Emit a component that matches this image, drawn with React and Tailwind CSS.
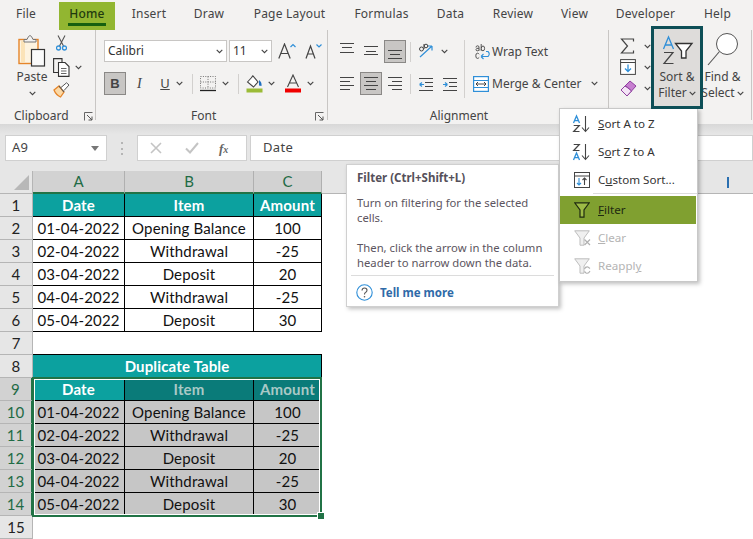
import React from "react";

const UI = { fontFamily: '"Noto Sans","Open Sans",sans-serif' };
const CELL = { fontFamily: 'Lato,"Liberation Sans",sans-serif' };

const Chev = ({ className = "", color = "#444" }) => (
  <svg width="7" height="5" viewBox="0 0 7 5" className={className}>
    <path d="M0.7 0.9 L3.5 3.7 L6.3 0.9" fill="none" stroke={color} strokeWidth="1.1" />
  </svg>
);

const Launcher = () => (
  <svg width="9" height="9" viewBox="0 0 9 9">
    <path d="M0.5 8.5 V0.5 H8.5" fill="none" stroke="#666" strokeWidth="1" />
    <path d="M3 3 L8 8 M8 4.5 V8 H4.5" fill="none" stroke="#555" strokeWidth="1" />
  </svg>
);

const Lines = ({ rows }) => (
  <svg width="14" height="14" viewBox="0 0 14 14" className="shrink-0 overflow-visible">
    {rows.map(([y, a, b], i) => (
      <path key={i} d={`M${a} ${y + 0.5} H${b}`} stroke="#444" strokeWidth="1" />
    ))}
  </svg>
);

const Separator = ({ className }) => <div className={`w-px h-[20px] bg-[#d2d0ce] shrink-0 ${className}`} />;

function Tab({ label, cls }) {
  return <div className={`flex justify-center whitespace-nowrap ${cls}`}>{label}</div>;
}

function Tabs() {
  return (
    <div className="flex h-[30px] text-[12px] text-[#444] items-start bg-[#f3f2f1] tracking-[0.2px]">
      <Tab label="File" cls="ml-[17px] w-[18px] pt-[5px]" />
      <div className="ml-[24px] w-[56px] h-[28px] mt-[2px] bg-[#92b631] flex flex-col items-center pt-[3px] text-[#1f3a0f] font-medium">
        <span className="leading-[17px]">Home</span>
        <div className="w-[38px] h-[2.5px] bg-[#16600f] mt-[1px]" />
      </div>
      <Tab label="Insert" cls="ml-[18px] w-[32px] pt-[5px]" />
      <Tab label="Draw" cls="ml-[29px] w-[30px] pt-[5px]" />
      <Tab label="Page Layout" cls="ml-[30px] w-[71px] pt-[5px]" />
      <Tab label="Formulas" cls="ml-[30px] w-[53px] pt-[5px]" />
      <Tab label="Data" cls="ml-[29px] w-[27px] pt-[5px]" />
      <Tab label="Review" cls="ml-[29px] w-[40px] pt-[5px]" />
      <Tab label="View" cls="ml-[28px] w-[27px] pt-[5px]" />
      <Tab label="Developer" cls="ml-[28px] w-[59px] pt-[5px]" />
      <Tab label="Help" cls="ml-[29px] w-[27px] pt-[5px]" />
    </div>
  );
}

const PasteIcon = () => (
  <svg width="28" height="32" viewBox="0 0 28 32">
    <rect x="1" y="4.5" width="19" height="24" fill="#fdf3e0" stroke="#e5852a" strokeWidth="1.4" />
    <rect x="3" y="6" width="4" height="21" fill="#fbe3b8" />
    <path d="M6 7 V4.5 H9 Q10.5 0.5 12 0.5 Q13.5 0.5 15 4.5 H18 V7 Z" fill="#f3f2f1" stroke="#777" strokeWidth="1" />
    <rect x="13.5" y="14.5" width="13" height="16.5" fill="#fafafa" stroke="#333" strokeWidth="1.2" />
  </svg>
);
const Scissors = () => (
  <svg width="11" height="16" viewBox="0 0 11 16">
    <path d="M2 0.5 L7.5 11 M9 0.5 L3.5 11" stroke="#555" strokeWidth="1.1" fill="none" />
    <circle cx="2.5" cy="13" r="2" fill="none" stroke="#2f8fd8" strokeWidth="1.3" />
    <circle cx="8.5" cy="13" r="2" fill="none" stroke="#2f8fd8" strokeWidth="1.3" />
  </svg>
);
const CopyIcon = () => (
  <svg width="17" height="19" viewBox="0 0 17 19">
    <path d="M5 14.5 H0.6 V0.6 H9 V4" fill="none" stroke="#333" strokeWidth="1.1" />
    <path d="M5.5 4.5 H12 L16 8.5 V18.4 H5.5 Z" fill="#fff" stroke="#333" strokeWidth="1.1" />
    <path d="M8 10.5 H13.5 M8 13 H13.5 M8 15.5 H13.5" stroke="#555" strokeWidth="0.9" />
  </svg>
);
const Brush = () => (
  <svg width="17" height="16" viewBox="0 0 17 16">
    <path d="M1 8 L6 4 L11 10 L7.5 15 Q3 13 1 8Z" fill="#fbd9a6" stroke="#e5852a" strokeWidth="1.3" />
    <path d="M6 4 L11 10" stroke="#555" strokeWidth="1.1" />
    <path d="M8 5.5 L13.5 0.8 L16 3 L11 8.5" fill="#fff" stroke="#555" strokeWidth="1" />
  </svg>
);

function Clipboard() {
  return (
    <div className="w-[96px] h-[90px] shrink-0 flex flex-col border-r border-[#c8c6c4]">
      <div className="flex h-[76px] shrink-0">
        <div className="ml-[18px] w-[28px] flex flex-col items-center pt-[5px]">
          <PasteIcon />
          <span className="text-[12px] leading-[16px] mt-[2px] text-[#444]">Paste</span>
          <Chev className="mt-[6px]" />
        </div>
        <div className="ml-[7px] flex flex-col pt-[5px]">
          <div className="ml-[3px] h-[16px]"><Scissors /></div>
          <div className="mt-[7px] h-[19px] flex items-center">
            <CopyIcon />
            <Chev className="ml-[5px]" />
          </div>
          <div className="mt-[5px]"><Brush /></div>
        </div>
      </div>
      <div className="flex h-[20px] shrink-0 items-center text-[12px] text-[#444]">
        <span className="ml-[14px] w-[52px] whitespace-nowrap">Clipboard</span>
        <span className="ml-[18px] flex"><Launcher /></span>
      </div>
    </div>
  );
}

const BigA = ({ size, chev }) => (
  <svg width="18" height="16" viewBox="0 0 18 16">
    <path d={size === "l" ? "M0.8 15.5 L6.5 1 L12.2 15.5 M2.8 10.5 H10.2" : "M2 15.5 L6.5 3 L11 15.5 M3.6 11 H9.4"} fill="none" stroke="#444" strokeWidth="1.2" />
    <path d={chev === "up" ? "M12.5 4 L15 1.5 L17.5 4" : "M12.5 1.5 L15 4 L17.5 1.5"} fill="none" stroke="#2f8fd8" strokeWidth="1.2" />
  </svg>
);

const FillIcon = () => (
  <svg width="17" height="19" viewBox="0 0 17 19">
    <path d="M1.5 8 L7 2 L12 8 L7.5 13 Z" fill="#fff" stroke="#444" strokeWidth="1.1" />
    <path d="M5.5 3 Q7 0.5 8 3" fill="none" stroke="#444" />
    <path d="M13 6 Q16 8 15.5 12 L13 11.5Z" fill="#1f6fc0" />
    <rect x="0.5" y="14.5" width="16" height="4" fill="#9bbb37" />
  </svg>
);
const FontColor = () => (
  <svg width="16" height="19" viewBox="0 0 16 19">
    <path d="M2.5 13 L8 1 L13.5 13 M4.5 9 H11.5" fill="none" stroke="#444" strokeWidth="1.1" />
    <rect x="0" y="14.5" width="16" height="4" fill="#f00000" />
  </svg>
);
const BorderIcon = () => (
  <svg width="16" height="16" viewBox="0 0 16 16">
    <path d="M0.5 0.5 H15.5 V12 H0.5 Z M8 0.5 V12 M0.5 6 H15.5" fill="none" stroke="#555" strokeWidth="0.8" strokeDasharray="1 1.4" />
    <path d="M0 14.5 H16" stroke="#222" strokeWidth="1.3" />
  </svg>
);

function Font() {
  return (
    <div className="w-[232px] h-[90px] shrink-0 flex flex-col border-r border-[#c8c6c4]">
      <div className="h-[76px] shrink-0 pl-[8px] pt-[10px] flex flex-col">
        <div className="flex h-[22px] items-center">
          <div className="w-[123px] h-[22px] bg-white border border-[#c8c6c4] flex items-center justify-between pl-[3px] pr-[3px] text-[12px] text-[#333]">
            <span>Calibri</span><Chev />
          </div>
          <div className="ml-[2px] w-[43px] h-[22px] bg-white border border-[#c8c6c4] flex items-center justify-between pl-[3px] pr-[3px] text-[12px] text-[#333]">
            <span>11</span><Chev />
          </div>
          <div className="ml-[6px] flex"><BigA size="l" chev="up" /></div>
          <div className="ml-[8px] flex"><BigA size="s" chev="down" /></div>
        </div>
        <div className="flex h-[23px] mt-[10px] items-center text-[#444]">
          <div className="w-[22px] h-[23px] bg-[#c8c6c4] border border-[#8a8886] flex items-center justify-center font-bold text-[13px] leading-none" style={{ fontFamily: '"Liberation Sans",sans-serif' }}>B</div>
          <span className="ml-[11px] w-[8px] italic text-[14px] leading-none" style={{ fontFamily: '"Liberation Serif",serif' }}>I</span>
          <span className="ml-[14px] w-[12px] underline text-[13px] leading-none text-center">U</span>
          <Chev className="ml-[5px]" />
          <Separator className="ml-[9px]" />
          <div className="ml-[7px] flex"><BorderIcon /></div>
          <Chev className="ml-[6px]" />
          <Separator className="ml-[9px]" />
          <div className="ml-[7px] flex"><FillIcon /></div>
          <Chev className="ml-[5px]" />
          <div className="ml-[10px] flex"><FontColor /></div>
          <Chev className="ml-[6px]" />
        </div>
      </div>
      <div className="flex h-[20px] shrink-0 items-center text-[12px] text-[#444]">
        <span className="ml-[95px] w-[24px]">Font</span>
        <span className="ml-[100px] flex"><Launcher /></span>
      </div>
    </div>
  );
}

const top = [[-2, 0, 14], [2, 2, 12], [7, 0, 14]];
const mid = [[1, 0, 14], [6, 2, 12], [9, 0, 14]];
const bot = [[5, 0, 14], [9, 2, 12], [13, 0, 14]];
const left = [[0, 0, 14], [4, 0, 10], [8, 0, 14], [12, 0, 10]];
const cent = [[0, 0, 14], [4, 2, 12], [8, 0, 14], [12, 2, 12]];
const right = [[0, 0, 14], [4, 4, 14], [8, 0, 14], [12, 4, 14]];

const Orient = () => (
  <svg width="18" height="17" viewBox="0 0 18 17">
    <path d="M2 14 L14 3 M14 3 H9.5 M14 3 V7.5" stroke="#2f8fd8" strokeWidth="1.2" fill="none" />
    <circle cx="3.5" cy="6" r="2" fill="none" stroke="#444" strokeWidth="1" />
    <path d="M6 1 V6" stroke="#444" />
    <circle cx="8" cy="3" r="1.8" fill="none" stroke="#444" strokeWidth="1" />
  </svg>
);
const Indent = ({ dir }) => (
  <svg width="14" height="14" viewBox="0 0 14 14">
    <path d="M0 1.5 H14 M6 5.5 H14 M6 9.5 H14 M0 13.5 H14" stroke="#444" strokeWidth="1" />
    <path d={dir === "l" ? "M0.5 7.5 H5 M0.5 7.5 L3 5.5 M0.5 7.5 L3 9.5" : "M0 7.5 H4.5 M4.5 7.5 L2 5.5 M4.5 7.5 L2 9.5"} stroke="#2f8fd8" strokeWidth="1.2" fill="none" />
  </svg>
);
const WrapIcon = () => (
  <svg width="16" height="18" viewBox="0 0 16 18" className="overflow-visible">
    <path d="M1 4.5 Q1 2.8 2.6 2.8 Q4 2.8 4 4.2 V7.8 M4 5.2 Q1 5 1 6.6 Q1 7.8 2.4 7.8 Q3.6 7.8 4 6.8 M6.2 1 V7.8 M6.2 5.2 Q6.6 3 8 3 Q9.6 3 9.6 5.4 Q9.6 7.8 8 7.8 Q6.6 7.8 6.2 6.2 M4.2 11.2 Q3.4 10.2 2.4 10.2 Q0.8 10.2 0.8 12.8 Q0.8 15.4 2.4 15.4 Q3.4 15.4 4.2 14.4" fill="none" stroke="#444" strokeWidth="0.9" />
    <path d="M6 13.5 H13 Q15.5 11 13 8.5 H11 M6 13.5 L8.5 11 M6 13.5 L8.5 16" fill="none" stroke="#2f8fd8" strokeWidth="1.1" />
  </svg>
);
const MergeIcon = () => (
  <svg width="16" height="16" viewBox="0 0 16 16">
    <rect x="0.6" y="0.6" width="14.8" height="14.8" fill="#fff" stroke="#2f8fd8" strokeWidth="1.2" />
    <path d="M0.6 4.5 H15.4 M0.6 11.5 H15.4" stroke="#2f8fd8" />
    <path d="M3 8 H13 M3 8 L5 6 M3 8 L5 10 M13 8 L11 6 M13 8 L11 10" stroke="#333" strokeWidth="0.9" fill="none" />
  </svg>
);

function Alignment() {
  const active = "w-[22px] h-[23px] bg-[#c8c6c4] border border-[#8a8886] flex items-center justify-center shrink-0";
  return (
    <div className="w-[281px] h-[90px] shrink-0 flex flex-col border-r border-[#c8c6c4]">
      <div className="h-[76px] shrink-0 flex pt-[10px]">
        <div className="w-[137px] flex flex-col border-r border-[#d2d0ce] h-[58px] pl-[12px]">
          <div className="flex h-[23px] items-center">
            <Lines rows={top} />
            <div className="ml-[10px]"><Lines rows={mid} /></div>
            <div className={`ml-[6px] ${active}`}><Lines rows={bot} /></div>
            <Separator className="ml-[4px]" />
            <div className="ml-[7px] flex"><Orient /></div>
            <Chev className="ml-[5px]" />
          </div>
          <div className="flex h-[23px] mt-[9px] items-center">
            <Lines rows={left} />
            <div className={`ml-[6px] ${active}`}><Lines rows={cent} /></div>
            <div className="ml-[6px]"><Lines rows={right} /></div>
            <Separator className="ml-[8px]" />
            <div className="ml-[8px] flex"><Indent dir="l" /></div>
            <div className="ml-[10px] flex"><Indent dir="r" /></div>
          </div>
        </div>
        <div className="flex flex-col pl-[10px] text-[12px] text-[#444]">
          <div className="flex h-[23px] items-center">
            <WrapIcon />
            <span className="ml-px whitespace-nowrap">Wrap Text</span>
          </div>
          <div className="flex h-[23px] mt-[9px] items-center -ml-[2px]">
            <MergeIcon />
            <span className="ml-[3px] whitespace-nowrap">Merge &amp; Center</span>
            <Chev className="ml-[9px]" />
          </div>
        </div>
      </div>
      <div className="flex h-[20px] shrink-0 items-center justify-center pr-[18px] text-[12px] text-[#444]">Alignment</div>
    </div>
  );
}

const Sigma = () => (
  <svg width="15" height="16" viewBox="0 0 15 16">
    <path d="M13.5 3.5 V1 H1.5 L7.5 8 L1.5 15 H13.5 V12.5" fill="none" stroke="#444" strokeWidth="1.2" />
  </svg>
);
const FillDown = () => (
  <svg width="16" height="16" viewBox="0 0 16 16">
    <rect x="0.6" y="0.6" width="14.8" height="14.8" fill="#fff" stroke="#444" strokeWidth="1" />
    <path d="M0.6 3.5 H15.4" stroke="#444" />
    <path d="M8 5.5 V12.5 M5 9.5 L8 12.5 L11 9.5" fill="none" stroke="#2f8fd8" strokeWidth="1.3" />
  </svg>
);
const Eraser = () => (
  <svg width="17" height="17" viewBox="0 0 17 17">
    <path d="M1 10 L10 1 L16 6 L7 16 Z" fill="#c77fd0" stroke="#8f3f9f" strokeWidth="1" />
    <path d="M5.5 5.5 L11.5 11" stroke="#8f3f9f" />
    <path d="M8 8 L11.5 11 L7 16 L1 10 L5 6Z" fill="#f4e5f6" stroke="#8f3f9f" strokeWidth="1" />
  </svg>
);
const SortFilter = () => (
  <svg width="36" height="34" viewBox="0 0 36 34" className="overflow-visible">
    <path d="M4.5 15 L9.5 3 L14.5 15 M6.2 11 H12.8" fill="none" stroke="#2f8fd8" strokeWidth="1.3" />
    <path d="M5 18.5 H14 L5 29.5 H14.5" fill="none" stroke="#444" strokeWidth="1.2" />
    <path d="M16.5 9.5 H33 L27 17 V24 H22.5 V17 Z" fill="#fff" stroke="#333" strokeWidth="1.3" />
  </svg>
);
const Magnifier = () => (
  <svg width="32" height="34" viewBox="0 0 32 34">
    <circle cx="20" cy="12" r="10.5" fill="#fff" stroke="#555" strokeWidth="1" />
    <path d="M12.5 19.5 L1 33" stroke="#555" strokeWidth="1.1" />
  </svg>
);

function Editing() {
  return (
    <div className="w-[143px] h-[90px] shrink-0 flex border-r border-[#c8c6c4]">
      <div className="ml-[11px] w-[31px] flex flex-col pt-[7px]">
        <div className="flex h-[18px] items-center"><Sigma /><Chev className="ml-[9px]" /></div>
        <div className="flex h-[18px] mt-[3px] items-center"><FillDown /><Chev className="ml-[8px]" /></div>
        <div className="flex h-[18px] mt-[3px] items-center"><Eraser /><Chev className="ml-[7px]" /></div>
      </div>
      <div className="relative z-10 w-[52px] h-[83px] -mt-[4px] border-[3px] border-[#0d4f57] bg-[#dedcda] flex flex-col items-center pt-[5px] text-[12px] text-[#444] leading-[16px] shrink-0">
        <SortFilter />
        <span className="mt-px whitespace-nowrap">Sort &amp;</span>
        <span className="flex items-center whitespace-nowrap">Filter<Chev className="ml-[2px]" /></span>
      </div>
      <div className="w-[39px] flex flex-col items-center pt-[2px] text-[12px] text-[#444] leading-[16px] shrink-0">
        <Magnifier />
        <span className="mt-[3px] whitespace-nowrap">Find &amp;</span>
        <span className="flex items-center whitespace-nowrap">Select<Chev className="ml-[2px]" /></span>
      </div>
    </div>
  );
}

function FormulaBar() {
  return (
    <div className="h-[37px] flex items-start pt-px text-[13px] text-[#444]">
      <div className="ml-[5px] w-[102px] h-[26px] bg-white border border-[#d0d0d0] flex items-center justify-between pl-[6px] pr-[7px]">
        <span className="tracking-[0.3px]">A9</span>
        <svg width="8" height="5" viewBox="0 0 8 5"><path d="M0 0 H8 L4 5Z" fill="#777" /></svg>
      </div>
      <div className="ml-[14px] w-[3px] h-[13px] mt-[7px] flex flex-col justify-between">
        <div className="w-[2px] h-[2px] bg-[#b5b5b5]" />
        <div className="w-[2px] h-[2px] bg-[#b5b5b5]" />
        <div className="w-[2px] h-[2px] bg-[#b5b5b5]" />
      </div>
      <div className="ml-[13px] w-[110px] h-[26px] bg-white border border-[#d0d0d0] flex items-center">
        <svg width="12" height="12" viewBox="0 0 12 12" className="ml-[12px]"><path d="M1 1 L11 11 M11 1 L1 11" stroke="#c4c4c4" strokeWidth="1.6" /></svg>
        <svg width="14" height="12" viewBox="0 0 14 12" className="ml-[23px]"><path d="M1 6.5 L5 10.5 L13 1" stroke="#c4c4c4" strokeWidth="2" fill="none" /></svg>
        <span className="ml-[20px] italic font-bold text-[13px] text-[#666] leading-none" style={{ fontFamily: '"Liberation Serif",serif' }}>f<span className="text-[10px]">x</span></span>
      </div>
      <div className="ml-[3px] flex-1 h-[26px] bg-white border border-[#d0d0d0] flex items-center pl-[12px] tracking-[0.3px]">Date</div>
    </div>
  );
}

const colW = ["w-[92px]", "w-[129px]", "w-[68px]"];

function ColHeader() {
  const cols = ["A", "B", "C"];
  return (
    <div className="h-[23px] flex" >
      <div className="w-[33px] h-full flex items-end justify-end pr-[3px] pb-[3px] border-r border-b border-[#b5b5b5] bg-[#e6e6e6]">
        <svg width="15" height="15" viewBox="0 0 15 15"><path d="M15 0 V15 H0 Z" fill="#b8b8b8" /></svg>
      </div>
      {cols.map((c, i) => (
        <div key={c} className={`${colW[i]} h-full bg-[#d2d2d2] border-r border-[#b0b0b0] border-b-2 border-b-[#217346] flex items-center justify-center text-[#1f6b45] text-[15px]`} style={CELL}>{c}</div>
      ))}
      <div className="flex-1 h-full bg-[#e6e6e6] border-b border-[#b5b5b5] flex items-center justify-end pr-[24px]">
        <div className="w-[2px] h-[11px] bg-[#2a6fb0]" />
      </div>
    </div>
  );
}

function RowHead({ n, sel }) {
  return (
    <div className={`w-[33px] h-full shrink-0 flex items-center justify-center text-[15px] border-b border-[#b5b5b5] ${sel ? "bg-[#d2d2d2] text-[#1f6b45] border-r-2 border-r-[#217346]" : "bg-[#e6e6e6] text-[#222] border-r border-r-[#b5b5b5]"}`}>{n}</div>
  );
}

function Row({ n, cells, header, sel }) {
  const bg = (i) => {
    if (header && sel) return i === 0 ? "bg-[#0ca19f] text-white font-bold" : "bg-[#0a7b79] text-[#a9c9c6] font-bold";
    if (header) return "bg-[#0ca19f] text-white font-bold";
    if (sel) return "bg-[#c6c6c6] text-[#111]";
    return "bg-white text-[#111]";
  };
  return (
    <div className="flex h-[23px] text-[15px] tracking-[0.15px]" style={CELL}>
      <RowHead n={n} sel={sel} />
      {cells.map((c, i) => (
        <div key={i} className={`${colW[i]} h-full border-r border-b border-black flex items-center justify-center whitespace-nowrap ${bg(i)}`}>{c}</div>
      ))}
    </div>
  );
}

const data = [
  ["01-04-2022", "Opening Balance", "100"],
  ["02-04-2022", "Withdrawal", "-25"],
  ["03-04-2022", "Deposit", "20"],
  ["04-04-2022", "Withdrawal", "-25"],
  ["05-04-2022", "Deposit", "30"],
];

function Sheet() {
  return (
    <div className="flex-1 bg-white relative">
      <Row n={1} header cells={["Date", "Item", "Amount"]} />
      {data.map((d, i) => <Row key={i} n={i + 2} cells={d} />)}
      <div className="flex h-[23px] text-[15px]" style={CELL}>
        <RowHead n={7} />
        <div className="w-[289px] border-b border-black" />
      </div>
      <div className="flex h-[23px] text-[15px] tracking-[0.15px]" style={CELL}>
        <RowHead n={8} />
        <div className="w-[289px] h-full bg-[#0ca19f] border-r border-b border-black text-white font-bold flex items-center justify-center">Duplicate Table</div>
      </div>
      <Row n={9} header sel cells={["Date", "Item", "Amount"]} />
      {data.map((d, i) => <Row key={i} n={i + 10} sel cells={d} />)}
      <div className="flex h-[23px] text-[15px]" style={CELL}>
        <RowHead n={15} />
      </div>
      <div className="absolute left-[32px] top-[183px] w-[290px] h-[140px] border-2 border-[#217346] pointer-events-none">
        <div className="w-full h-full border border-white" />
        <div className="absolute -right-[4px] -bottom-[4px] w-[6px] h-[6px] bg-[#217346] border border-white box-content -m-px" />
      </div>
    </div>
  );
}

const AZ = ({ a, b, ca, cb }) => (
  <svg width="18" height="18" viewBox="0 0 18 18" className="overflow-visible">
    {a === "A" ? (
      <>
        <path d="M0.5 8 L3.5 1 L6.5 8 M1.6 5.6 H5.4" fill="none" stroke={ca} strokeWidth="1.3" />
        <path d="M0.7 10.5 H6.3 L0.7 16.5 H6.5" fill="none" stroke={cb} strokeWidth="1.2" />
      </>
    ) : (
      <>
        <path d="M0.7 1.5 H6.3 L0.7 7.5 H6.5" fill="none" stroke={ca} strokeWidth="1.2" />
        <path d="M0.5 17 L3.5 10 L6.5 17 M1.6 14.6 H5.4" fill="none" stroke={cb} strokeWidth="1.3" />
      </>
    )}
    <path d="M12.5 1 V16 M9 12.5 L12.5 16.5 L16 12.5" fill="none" stroke="#444" strokeWidth="1.1" />
  </svg>
);
const CustomSort = () => (
  <svg width="16" height="16" viewBox="0 0 16 16">
    <rect x="0.5" y="0.5" width="15" height="15" fill="#fff" stroke="#444" />
    <path d="M0.5 4 H15.5" stroke="#444" />
    <path d="M5 6 V13 M3 11 L5 13 L7 11" fill="none" stroke="#2f8fd8" strokeWidth="1.1" />
    <path d="M10.5 13 V6 M8.5 8 L10.5 6 L12.5 8" fill="none" stroke="#444" strokeWidth="1.1" />
  </svg>
);
const Funnel = ({ fill, stroke, w = 1.2 }) => (
  <svg width="16" height="16" viewBox="0 0 16 16">
    <path d="M0.7 0.8 H15.3 L10 8 V15.2 H6 V8 Z" fill={fill} stroke={stroke} strokeWidth={w} />
  </svg>
);
const FunnelX = () => (
  <svg width="17" height="16" viewBox="0 0 17 16">
    <path d="M0.7 0.8 H15.3 L10 8 V15.2 H6 V8 Z" fill="#f0f0f0" stroke="#bdbdbd" />
    <path d="M10.5 9.5 L16 15 M16 9.5 L10.5 15" stroke="#b0b0b0" strokeWidth="1.2" />
  </svg>
);
const FunnelR = () => (
  <svg width="17" height="16" viewBox="0 0 17 16">
    <path d="M0.7 0.8 H15.3 L10 8 V15.2 H6 V8 Z" fill="#f0f0f0" stroke="#bdbdbd" />
    <path d="M10.5 11 Q11.5 8.5 14 9 L16 10.5 M16 13 Q14.5 16 12 15 L10.5 13.5" fill="none" stroke="#b0b0b0" strokeWidth="1.1" />
  </svg>
);

function MenuItem({ icon, children, cls = "" }) {
  return (
    <div className={`h-[28px] flex items-center pl-[13px] ${cls}`}>
      <div className="w-[18px] flex justify-center shrink-0">{icon}</div>
      <span className="ml-[7px] whitespace-nowrap">{children}</span>
    </div>
  );
}

function Menu() {
  return (
    <div className="absolute left-[559px] top-[108px] w-[139px] h-[174px] bg-white border border-[#c8c8c8] shadow-[2px_2px_4px_rgba(0,0,0,0.25)] text-[11.6px] text-[#333] pt-[1px]" >
      <MenuItem icon={<AZ a="A" b="Z" ca="#2f8fd8" cb="#444" />}><u>S</u>ort A to Z</MenuItem>
      <MenuItem icon={<AZ a="Z" b="A" ca="#444" cb="#2f8fd8" />}>S<u>o</u>rt Z to A</MenuItem>
      <MenuItem icon={<CustomSort />}>C<u>u</u>stom Sort...</MenuItem>
      <div className="ml-[33px] h-px bg-[#dcdcdc] -mt-[1px]" />
      <div className="h-[2px]" />
      <MenuItem icon={<Funnel fill="#9dbb46" stroke="#1e2a10" />} cls="bg-[#80a030] w-[136px] text-[#1e2a10]"><u>F</u>ilter</MenuItem>
      <MenuItem icon={<FunnelX />} cls="text-[#b4b4b4]"><u>C</u>lear</MenuItem>
      <MenuItem icon={<FunnelR />} cls="text-[#b4b4b4]">Reappl<u>y</u></MenuItem>
    </div>
  );
}

function Tooltip() {
  return (
    <div className="absolute left-[346px] top-[164px] w-[213px] h-[143px] bg-white border border-[#d0d0d0] shadow-[2px_2px_4px_rgba(0,0,0,0.25)] text-[11.3px] text-[#5c5560] flex flex-col">
      <div className="ml-[10px] mt-[5px] h-[16px] leading-[16px] font-bold text-[#55505a] text-[11.5px] whitespace-nowrap">Filter (Ctrl+Shift+L)</div>
      <div className="ml-[10px] mt-[9px] leading-[15px] w-[195px]">
        <p>Turn on filtering for the selected cells.</p>
        <p className="mt-[15px]">Then, click the arrow in the column header to narrow down the data.</p>
      </div>
      <div className="mx-[4px] mt-[5px] h-px bg-[#dcdcdc]" />
      <div className="flex items-center ml-[9px] mt-[7px]">
        <svg width="17" height="17" viewBox="0 0 17 17">
          <circle cx="8.5" cy="8.5" r="7.7" fill="none" stroke="#2f8fd8" strokeWidth="1.1" />
          <path d="M6 6.5 Q6.2 4 8.5 4 Q11 4 11 6.3 Q11 7.7 9.5 8.5 Q8.5 9 8.5 10.5" fill="none" stroke="#555" strokeWidth="1.1" />
          <circle cx="8.5" cy="12.7" r="0.8" fill="#555" />
        </svg>
        <span className="ml-[7px] mt-px font-bold text-[#2f6aa8] text-[11.5px]">Tell me more</span>
      </div>
    </div>
  );
}

export default function App() {
  return (
    <div className="relative w-[753px] h-[539px] overflow-hidden bg-[#e6e6e6] flex flex-col" style={UI}>
      <Tabs />
      <div className="h-[94px] bg-[#f3f2f1] flex">
        <Clipboard />
        <Font />
        <Alignment />
        <Editing />
      </div>
      <div className="h-[10px] bg-gradient-to-b from-[#d8d8d8] to-[#e6e6e6]" />
      <FormulaBar />
      <ColHeader />
      <Sheet />
      <Tooltip />
      <Menu />
    </div>
  );
}
